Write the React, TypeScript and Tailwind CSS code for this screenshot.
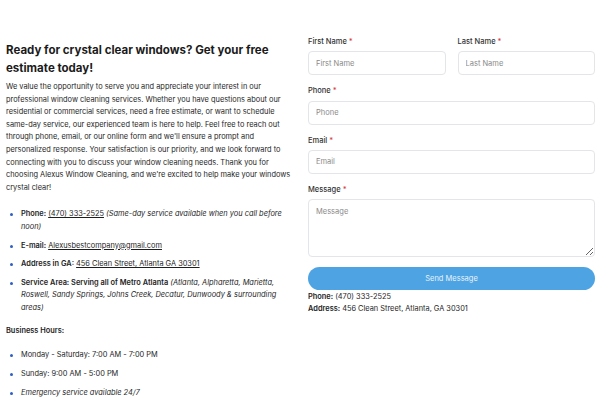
import type { ReactNode } from "react";

const font = "font-['Inter','Liberation_Sans',sans-serif]";

function Bullet({ children }: { children: ReactNode }) {
  return (
    <li className="flex gap-[8px]">
      <span className="mt-[5px] ml-[4px] h-[3px] w-[3px] shrink-0 rounded-full bg-[#2f5fc4]" />
      <div>{children}</div>
    </li>
  );
}

function Field({ label, placeholder }: { label: string; placeholder: string }) {
  return (
    <label className="flex flex-col gap-[4px]">
      <span className="text-[7.5px] font-medium text-[#333]">
        {label} <span className="text-[#d9383a]">*</span>
      </span>
      <input
        placeholder={placeholder}
        className="h-[24px] rounded-[4px] border border-[#e3e5e8] px-[7px] text-[7.5px] text-[#333] placeholder:text-[#8a8a8a] outline-none"
      />
    </label>
  );
}

export default function App() {
  return (
    <div className={`${font} flex h-[400px] w-[600px] overflow-hidden bg-white text-[#1e1e1e]`}>
      <section className="w-[292px] shrink-0 pl-[6px] pt-[41px]">
        <h2 className="text-[11.5px] font-bold leading-[18px] text-[#1b1b1b]">
          Ready for crystal clear windows? Get your free estimate today!
        </h2>
        <p className="mt-[4px] text-[7.4px] leading-[12.6px]">
          We value the opportunity to serve you and appreciate your interest in our professional window
          cleaning services. Whether you have questions about our residential or commercial services, need a
          free estimate, or want to schedule same-day service, our experienced team is here to help. Feel free
          to reach out through phone, email, or our online form and we'll ensure a prompt and personalized
          response. Your satisfaction is our priority, and we look forward to connecting with you to discuss
          your window cleaning needs. Thank you for choosing Alexus Window Cleaning, and we're excited to help
          make your windows crystal clear!
        </p>

        <ul className="mt-[14px] flex flex-col gap-[6px] pr-[10px] text-[7.4px] leading-[12.6px]">
          <Bullet>
            <b className="font-semibold">Phone:</b> <span className="underline">(470) 333-2525</span>{" "}
            <i>(Same-day service available when you call before noon)</i>
          </Bullet>
          <Bullet>
            <b className="font-semibold">E-mail:</b>{" "}
            <span className="underline">Alexusbestcompany@gmail.com</span>
          </Bullet>
          <Bullet>
            <b className="font-semibold">Address in GA:</b>{" "}
            <span className="underline">456 Clean Street, Atlanta GA 30301</span>
          </Bullet>
          <Bullet>
            <b className="font-semibold">Service Area: Serving all of Metro Atlanta</b>{" "}
            <i>
              (Atlanta, Alpharetta, Marietta, Roswell, Sandy Springs, Johns Creek, Decatur, Dunwoody &amp;
              surrounding areas)
            </i>
          </Bullet>
        </ul>

        <p className="mt-[10px] text-[7.4px] font-semibold leading-[12.6px]">Business Hours:</p>

        <ul className="mt-[12px] flex flex-col gap-[6.6px] text-[7.4px] leading-[12.6px]">
          <Bullet>Monday - Saturday: 7:00 AM - 7:00 PM</Bullet>
          <Bullet>Sunday: 9:00 AM - 5:00 PM</Bullet>
          <Bullet>
            <i>Emergency service available 24/7</i>
          </Bullet>
        </ul>
      </section>

      <section className="ml-[16px] w-[287px] shrink-0 pt-[36px]">
        <form className="flex flex-col gap-[10px]">
          <div className="grid grid-cols-2 gap-[12px]">
            <Field label="First Name" placeholder="First Name" />
            <Field label="Last Name" placeholder="Last Name" />
          </div>
          <Field label="Phone" placeholder="Phone" />
          <Field label="Email" placeholder="Email" />
          <label className="flex flex-col gap-[4px]">
            <span className="text-[7.5px] font-medium text-[#333]">
              Message <span className="text-[#d9383a]">*</span>
            </span>
            <textarea
              placeholder="Message"
              className="h-[58px] rounded-[4px] border border-[#e3e5e8] px-[7px] py-[6px] text-[7.5px] placeholder:text-[#8a8a8a] outline-none"
            />
          </label>
          <button type="button" className="h-[23px] rounded-full bg-[#4ea3e2] text-[7.5px] text-[#e8f3fc]">
            Send Message
          </button>
        </form>
        <div className="mt-[1px] text-[7.4px] leading-[12px] text-[#1e1e1e]">
          <p>
            <b className="font-semibold">Phone:</b> (470) 333-2525
          </p>
          <p>
            <b className="font-semibold">Address:</b> 456 Clean Street, Atlanta, GA 30301
          </p>
        </div>
      </section>
    </div>
  );
}
